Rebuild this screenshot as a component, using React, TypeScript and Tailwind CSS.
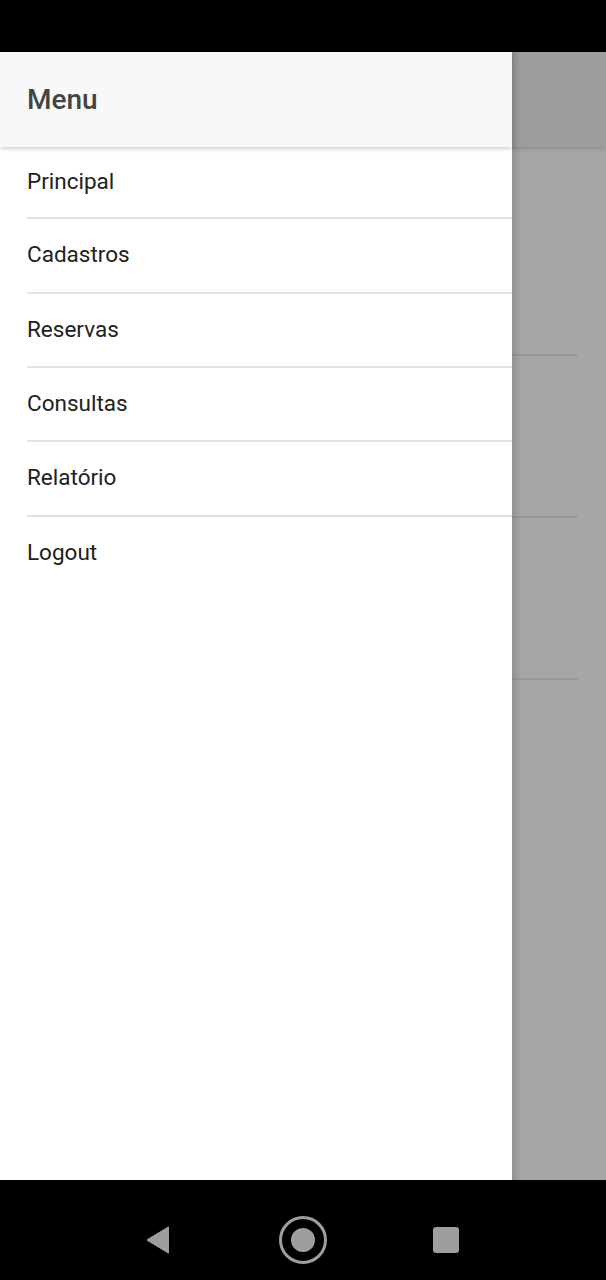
export default function App() {
  const items = ["Principal", "Cadastros", "Reservas", "Consultas", "Relatório", "Logout"];
  const heights = ["h-[72px]", "h-[75px]", "h-[74px]", "h-[74px]", "h-[75px]", "h-[74px]"];
  return (
    <div className="w-[606px] h-[1280px] flex flex-col bg-black" style={{ fontFamily: "Roboto, 'Noto Sans', sans-serif" }}>
      <div className="h-[52px] bg-black" />
      <div className="h-[1128px] flex flex-row">
        <div className="w-[512px] bg-white flex flex-col relative z-10">
          <div className="h-[95px] bg-[#f8f8f8] flex items-center px-[27px] shadow-[0_2px_4px_rgba(0,0,0,0.18)] relative z-10">
            <span className="text-[28px] font-medium text-[#444444] leading-none">Menu</span>
          </div>
          {items.map((t, i) => (
            <div key={t} className={`${heights[i]} flex flex-col`}>
              <div className={`flex-1 flex items-center pl-[27px] ${i < items.length - 1 ? "pb-[2px]" : "pb-[4px]"}`}>
                <span className="text-[22.5px] text-[#212121] leading-none">{t}</span>
              </div>
              {i < items.length - 1 && <div className="ml-[27px] h-[2px] bg-[#e2e2e2]" />}
            </div>
          ))}
        </div>
        <div className="flex-1 bg-[#a6a6a6] flex flex-col relative">
          <div className="absolute left-0 top-0 bottom-0 w-[10px] bg-gradient-to-r from-[rgba(0,0,0,0.12)] to-transparent" />
          <div className="h-[95px] bg-[#9e9e9e] shadow-[0_2px_4px_rgba(0,0,0,0.15)]" />
          <div className="h-[207px]" />
          <div className="w-[66px] h-[2px] bg-[#999999]" />
          <div className="h-[160px]" />
          <div className="w-[66px] h-[2px] bg-[#999999]" />
          <div className="h-[160px]" />
          <div className="w-[66px] h-[2px] bg-[#999999]" />
        </div>
      </div>
      <div className="h-[100px] bg-black flex items-center pt-[20px]">
        <svg width="24" height="28" viewBox="0 0 24 28" className="ml-[146px]">
          <path d="M23 1.5 L23 26.5 Q23 28 21.5 27 L1.5 15 Q0 14 1.5 13 L21.5 1 Q23 0 23 1.5 Z" fill="#9e9e9e" />
        </svg>
        <svg width="48" height="48" viewBox="0 0 48 48" className="ml-[109px]">
          <circle cx="24" cy="24" r="22.5" fill="none" stroke="#9e9e9e" strokeWidth="3" />
          <circle cx="24" cy="24" r="12" fill="#9e9e9e" />
        </svg>
        <div className="ml-[106px] w-[26px] h-[26px] rounded-[3px] bg-[#9e9e9e]" />
      </div>
    </div>
  );
}
